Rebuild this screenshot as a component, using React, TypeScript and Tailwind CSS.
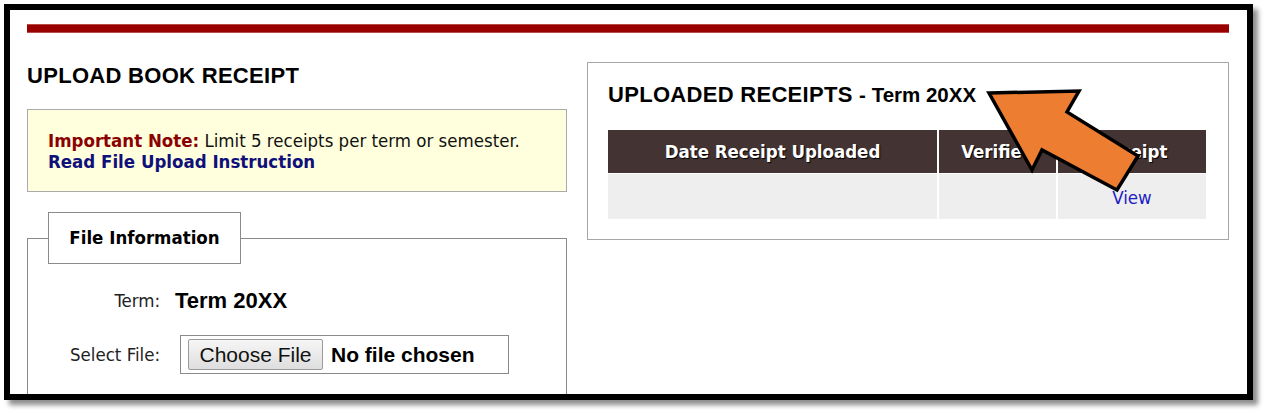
import React from "react";

const tah = "font-['DejaVu_Sans_Condensed','DejaVu_Sans',sans-serif] font-stretch-condensed";

export default function App() {
  return (
    <div className="relative w-[1266px] h-[413px] bg-white pl-[4px] pt-[4px] font-['Liberation_Sans',Arial,sans-serif] text-black">
      <div className="w-[1249px] h-[396px] border-[6px] border-black bg-white overflow-hidden shadow-[5px_5px_5px_rgba(0,0,0,0.45)]">
        <div className="pl-[17px] pr-[18px] pt-[14px]">
          <div className="h-[9px] bg-[#990000] border-y border-[#b84a4a]" />
          <div className="flex items-start gap-[20px]">
            {/* Left column */}
            <div className="w-[540px] shrink-0">
              <h2 className="mt-[30px] text-[22px] leading-[26px] font-bold tracking-[0.3px]">UPLOAD BOOK RECEIPT</h2>
              <div className={`mt-[20px] h-[83px] border border-[#aaaaaa] bg-[#ffffdd] pl-[20px] pt-[20px] text-[18.5px] leading-[21px] text-[#111] ${tah}`}>
                <div>
                  <span className="font-bold text-[#8b0000]">Important Note:</span> Limit 5 receipts per term or semester.
                </div>
                <div className="font-bold text-[#10107a]">Read File Upload Instruction</div>
              </div>
              <fieldset className="mt-[20px] border border-[#8a8a8a] p-0 pb-[40px] text-left">
                <legend className="ml-[20px] p-0 text-left">
                  <div className={`w-[193px] h-[52px] border border-[#8a8a8a] bg-white text-center text-[18.5px] leading-[50px] font-bold ${tah}`}>
                    File Information
                  </div>
                </legend>
                <div className="pt-[19px]">
                  <div className="flex items-center h-[35px]">
                    <div className={`w-[132px] text-right text-[18.5px] text-[#222] ${tah}`}>Term:</div>
                    <div className="ml-[15px] text-[22px] font-bold">Term 20XX</div>
                  </div>
                  <div className="flex items-center h-[39px] mt-[17px]">
                    <div className={`w-[132px] text-right text-[18.5px] text-[#222] ${tah}`}>Select File:</div>
                    <div className="ml-[20px] w-[329px] h-[39px] border border-[#8a8a8a] flex items-center pl-[7px]">
                      <div className="h-[31px] w-[135px] border border-[#9a9a9a] rounded-[2px] bg-gradient-to-b from-[#f6f6f6] to-[#dedede] flex items-center justify-center text-[21px] text-[#111]">
                        Choose File
                      </div>
                      <span className="ml-[8px] text-[21px] font-bold">No file chosen</span>
                    </div>
                  </div>
                </div>
              </fieldset>
            </div>

            {/* Right column */}
            <div className="w-[642px] shrink-0 mt-[29px] border border-[#a6a6a6] pl-[20px] pr-[22px] pt-[19px] pb-[20px]">
              <h2 className="text-[22px] leading-[26px] font-bold tracking-[0.3px]">
                UPLOADED RECEIPTS <span className="text-[20.5px] tracking-normal">- Term 20XX</span>
              </h2>
              <div className="mt-[22px] grid grid-cols-[329px_117px_148px] gap-x-[2px] gap-y-[1px]">
                <div className={`h-[43px] bg-[#433333] flex items-center justify-center text-white font-bold text-[18.5px] [text-shadow:1px_1px_1px_#000] ${tah}`}>Date Receipt Uploaded</div>
                <div className={`h-[43px] bg-[#433333] flex items-center justify-center text-white font-bold text-[18.5px] [text-shadow:1px_1px_1px_#000] ${tah}`}>Verified</div>
                <div className={`h-[43px] bg-[#433333] flex items-center justify-center text-white font-bold text-[18.5px] [text-shadow:1px_1px_1px_#000] ${tah}`}>Receipt</div>
                <div className="h-[45px] bg-[#eeeeee]" />
                <div className="h-[45px] bg-[#eeeeee]" />
                <div className={`h-[45px] bg-[#eeeeee] flex items-center justify-center pt-[3px] text-[18.5px] text-[#1d1dc4] ${tah}`}>View</div>
              </div>
            </div>
          </div>
        </div>
      </div>

      {/* Annotation arrow */}
      <svg className="absolute left-0 top-0 pointer-events-none" width="1266" height="413" viewBox="0 0 1266 413">
        <polygon
          points="989,93 1079,91 1067,112 1138,156 1117,190 1042,150 1032,170"
          fill="#ED7D31"
          stroke="#000"
          strokeWidth="3.5"
          strokeLinejoin="miter"
        />
      </svg>
    </div>
  );
}
